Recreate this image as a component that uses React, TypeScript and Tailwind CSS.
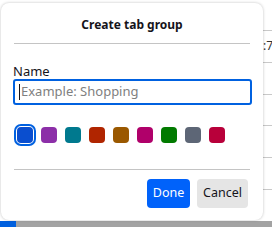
import React from 'react';

const swatches = ['#0a4ecf', '#8c2fa8', '#00798e', '#b02500', '#9a5800', '#b0006a', '#017a00', '#5d6676', '#b8003a'];

export default function App() {
  return (
    <div className="relative w-[272px] h-[227px] overflow-hidden bg-white font-['Noto_Sans',sans-serif] text-[#15141a]">
      {/* page behind the panel */}
      <div className="flex h-[221px] justify-end">
        <div className="w-[9px] pt-[30px] flex flex-col">
          {[0, 1, 2, 3, 4, 5].map((i) => (
            <div key={i} className="h-[32px] border-t border-[#c9c9c9] text-[12px] leading-[30px] text-[#333]">
              {i === 0 ? ':7' : ''}
            </div>
          ))}
        </div>
      </div>
      <div className="flex h-[6px] bg-[#a3a3a3]">
        <div className="w-[16px] bg-[#0060df]" />
      </div>

      {/* create tab group panel */}
      <div className="absolute left-[1px] top-[3px] w-[262px] h-[217px] rounded-lg bg-white shadow-[0_0_3px_rgba(0,0,0,0.25)] flex flex-col px-[12px]">
        <div className="pt-[13px] text-center text-[12px] font-bold leading-[18px]">Create tab group</div>
        <div className="mt-[9px] mx-[1px] border-t border-[#c4c4c4]" />
        <div className="mt-[20px] text-[13px] leading-[14px]">Name</div>
        <div className="mt-[1px] h-[26px] w-[239px] rounded-[3px] border-2 border-[#0061e0] flex items-center px-[4px]">
          <span className="w-px h-[16px] bg-[#15141a]" />
          <span className="ml-[1px] text-[13px] text-[#808080]">Example: Shopping</span>
        </div>
        <div className="mt-[22px] flex items-center gap-[8px] pl-[4px]">
          {swatches.map((c, i) => (
            <div
              key={c}
              className={
                i === 0
                  ? 'w-[16px] h-[16px] outline-2 outline-offset-[1px] outline-[#0061e0] rounded-[4px]'
                  : 'w-[16px] h-[16px] rounded-[4px]'
              }
              style={{ backgroundColor: c }}
            />
          ))}
        </div>
        <div className="mt-[26px] mx-[1px] border-t border-[#c4c4c4]" />
        <div className="mt-[9px] flex justify-end gap-[7px] pr-[3px]">
          <button className="h-[29px] w-[43px] rounded-[4px] bg-[#0062fa] text-white text-[12.5px]">Done</button>
          <button className="h-[29px] w-[51px] rounded-[4px] bg-[#e5e5e5] text-[#15141a] text-[12.5px]">Cancel</button>
        </div>
      </div>
    </div>
  );
}
